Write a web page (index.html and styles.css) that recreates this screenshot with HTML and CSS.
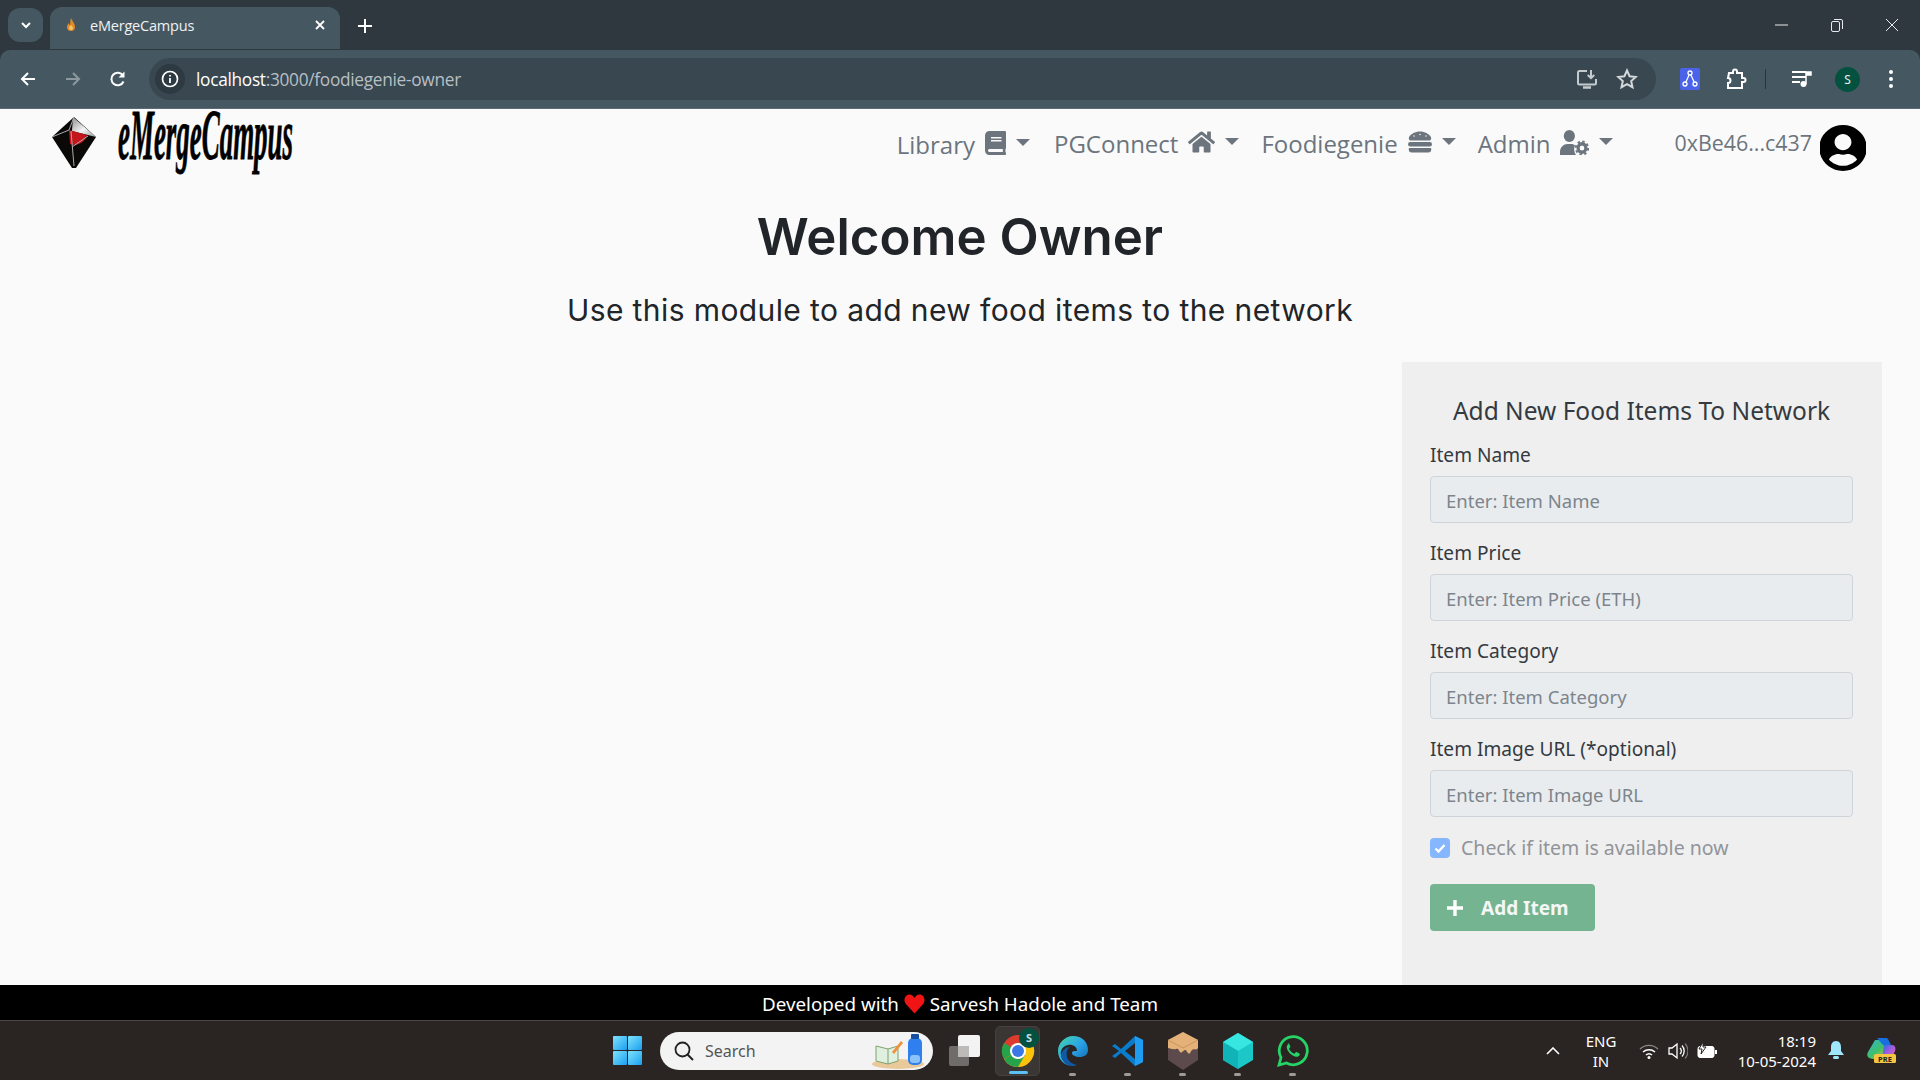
FILE: index.html
```html
<!DOCTYPE html>
<html lang="en">
<head>
<meta charset="utf-8">
<title>eMergeCampus</title>
<link rel="stylesheet" href="styles.css">
</head>
<body>
<header class="chrome">
  <div class="tabstrip">
    <button class="tabs-menu"><svg width="14" height="14" viewBox="0 0 14 14"><path d="M3 5l4 4 4-4" fill="none" stroke="#fff" stroke-width="2"/></svg></button>
    <div class="tab">
      <svg class="favicon" width="14" height="16" viewBox="0 0 14 16"><path d="M7 1c1 3 4 5 4 9a4 4 0 0 1-8 0c0-2 1-3 2-4 0 1 .5 2 1 2 .5-2 0-4 1-7z" fill="#e08a2a"/><path d="M7 8c1 1 2 2 2 3a2 2 0 0 1-4 0c0-1 1-2 2-3z" fill="#f7c46a"/></svg>
      <span class="tab-title">eMergeCampus</span>
      <svg width="12" height="12" viewBox="0 0 12 12"><path d="M2 2l8 8M10 2l-8 8" stroke="#fff" stroke-width="1.8"/></svg>
    </div>
    <svg class="newtab" width="14" height="14" viewBox="0 0 14 14"><path d="M7 0v14M0 7h14" stroke="#fff" stroke-width="2"/></svg>
    <div class="winctl">
      <svg width="14" height="14" viewBox="0 0 14 14"><path d="M0 7h13" stroke="#e8eaed" stroke-width="1"/></svg>
      <svg width="14" height="14" viewBox="0 0 14 14"><rect x="1.5" y="3.5" width="8" height="10" rx="1.5" fill="none" stroke="#e8eaed"/><path d="M4 1.5h7a1.5 1.5 0 0 1 1.5 1.5v8" fill="none" stroke="#e8eaed"/></svg>
      <svg width="14" height="14" viewBox="0 0 14 14"><path d="M1 1l12 12M13 1L1 13" stroke="#e8eaed" stroke-width="1"/></svg>
    </div>
  </div>
  <div class="toolbar">
    <svg class="tb-nav" width="18" height="18" viewBox="0 0 18 18"><path d="M16 9H3M9 3L3 9l6 6" fill="none" stroke="#fff" stroke-width="2"/></svg>
    <svg class="tb-nav" width="18" height="18" viewBox="0 0 18 18"><path d="M2 9h13M9 3l6 6-6 6" fill="none" stroke="#8c989e" stroke-width="2"/></svg>
    <svg class="tb-nav" width="18" height="18" viewBox="0 0 18 18"><path d="M14.5 11.5A6.3 6.3 0 1 1 14 5.5" fill="none" stroke="#fff" stroke-width="2"/><path d="M15.5 1.5v6h-6z" fill="#fff"/></svg>
    <div class="omnibox">
      <span class="site-info"><svg width="18" height="18" viewBox="0 0 18 18"><circle cx="9" cy="9" r="7.5" fill="none" stroke="#fff" stroke-width="1.7"/><path d="M9 8v5M9 5v1.6" stroke="#fff" stroke-width="1.8"/></svg></span>
      <span class="url"><span class="url-host">localhost</span>:3000/foodiegenie-owner</span>
      <svg class="omni-end" width="22" height="22" viewBox="0 0 22 22"><path d="M11 3H3.5A1.5 1.5 0 0 0 2 4.500V15a1.500 1.500 0 0 0 1.500 1.500h15A1.500 1.500 0 0 0 20 15v-4" fill="none" stroke="#c4cbcf" stroke-width="2"/><path d="M7 19.500h8" stroke="#c4cbcf" stroke-width="2.500"/><path d="M15 2v8M11.800 7l3.200 3.200L18.200 7" fill="none" stroke="#c4cbcf" stroke-width="2"/></svg>
      <svg class="omni-end" width="22" height="22" viewBox="0 0 22 22"><path d="M11 2.500l2.600 5.700 6.200.7-4.600 4.200 1.300 6.100L11 16.100l-5.500 3.100 1.300-6.100-4.600-4.200 6.200-.7z" fill="none" stroke="#d3d8db" stroke-width="2"/></svg>
    </div>
    <div class="tb-actions">
      <svg width="20" height="22" viewBox="0 0 20 22"><rect width="20" height="22" rx="2" fill="#4a63e8"/><path d="M10 5L5 16M10 5l5 11" stroke="#fff" stroke-width="1.300"/><circle cx="10" cy="5" r="2" fill="#4a63e8" stroke="#fff" stroke-width="1.300"/><circle cx="5" cy="16" r="2" fill="#4a63e8" stroke="#fff" stroke-width="1.300"/><circle cx="15" cy="16" r="2" fill="#4a63e8" stroke="#fff" stroke-width="1.300"/></svg>
      <svg class="gap-ext" width="22" height="22" viewBox="0 0 22 22"><path d="M4 5h4V3.500a2 2 0 0 1 4 0V5h5v5h1.500a2 2 0 0 1 0 4H17v6H3v-5a2.300 2.300 0 0 0 0-5z" fill="none" stroke="#fff" stroke-width="2"/></svg>
      <span class="tb-sep"></span>
      <svg width="20" height="20" viewBox="0 0 20 20"><path d="M0 3h14M0 8h14M0 13h8" stroke="#fff" stroke-width="2"/><path d="M14 6h5V3h-5zM14 3v12" stroke="#fff" stroke-width="1.500" fill="#fff"/><circle cx="11.500" cy="15" r="3" fill="#fff"/></svg>
      <span class="avatar-s">S</span>
      <svg class="kebab" width="4" height="18" viewBox="0 0 4 18"><circle cx="2" cy="2" r="2" fill="#fff"/><circle cx="2" cy="9" r="2" fill="#fff"/><circle cx="2" cy="16" r="2" fill="#fff"/></svg>
    </div>
  </div>
</header>

<main class="page">
  <nav class="navbar">
    <a class="brand" href="#">
      <svg class="brand-mark" width="44" height="51" viewBox="0 0 44 51">
        <defs><linearGradient id="gem" x1="0" y1="0" x2="1" y2="1"><stop offset="0" stop-color="#8d8d8d"/><stop offset=".55" stop-color="#f4f4f4"/><stop offset="1" stop-color="#9b9b9b"/></linearGradient></defs>
        <path d="M22 0L44 20 24 51 20 51 0 20z" fill="#0b0808"/>
        <path d="M21 0L44 20 20 14z" fill="url(#gem)"/>
        <path d="M17 13L35 18C33 25 27 28 21 28L18 27z" fill="#c3151b"/>
        <path d="M0 20L17 13M19 14L22 49M20 30L36 19M22 0L17 13" stroke="#aaa" stroke-width="1" fill="none"/>
      </svg>
      <span class="brand-clip"><span class="brand-text">eMergeCampus</span></span>
    </a>
    <ul class="nav-links">
      <li class="nav-item nav-library">Library
        <svg class="ico" width="21" height="24" viewBox="0 0 448 512"><path d="M448 360V24c0-13.300-10.700-24-24-24H96C43 0 0 43 0 96v320c0 53 43 96 96 96h328c13.300 0 24-10.700 24-24v-16c0-7.500-3.500-14.300-8.900-18.700-4.200-15.400-4.200-59.300 0-74.700 5.400-4.300 8.900-11.100 8.900-18.600zM128 134c0-3.300 2.700-6 6-6h212c3.300 0 6 2.700 6 6v20c0 3.300-2.700 6-6 6H134c-3.300 0-6-2.700-6-6v-20zm0 64c0-3.300 2.700-6 6-6h212c3.300 0 6 2.700 6 6v20c0 3.300-2.700 6-6 6H134c-3.300 0-6-2.700-6-6v-20zm253.400 250H96c-17.700 0-32-14.300-32-32 0-17.600 14.400-32 32-32h285.400c-1.900 17.100-1.900 46.900 0 64z"/></svg>
        <i class="caret"></i></li>
      <li class="nav-item">PGConnect
        <svg class="ico" width="27" height="24" viewBox="0 0 576 512"><path d="M280.370 148.260L96 300.110V464a16 16 0 0 0 16 16l112.060-.29a16 16 0 0 0 15.920-16V368a16 16 0 0 1 16-16h64a16 16 0 0 1 16 16v95.640a16 16 0 0 0 16 16.050L464 480a16 16 0 0 0 16-16V300L295.670 148.260a12.190 12.190 0 0 0-15.300 0zM571.600 251.470L488 182.560V44.050a12 12 0 0 0-12-12h-56a12 12 0 0 0-12 12v72.610L318.470 43a48 48 0 0 0-61 0L4.340 251.470a12 12 0 0 0-1.600 16.900l25.500 31A12 12 0 0 0 45.150 301l235.220-193.740a12.190 12.190 0 0 1 15.300 0L530.900 301a12 12 0 0 0 16.900-1.600l25.500-31a12 12 0 0 0-1.700-16.930z"/></svg>
        <i class="caret"></i></li>
      <li class="nav-item">Foodiegenie
        <svg class="ico" width="24" height="24" viewBox="0 0 512 512"><path d="M464 256H48a48 48 0 0 0 0 96h416a48 48 0 0 0 0-96zm16 128H32a16 16 0 0 0-16 16v16a64 64 0 0 0 64 64h352a64 64 0 0 0 64-64v-16a16 16 0 0 0-16-16zM58.640 224h394.720c34.570 0 54.620-43.900 34.820-75.880C448 83.200 359.550 32.100 256 32c-103.540.1-192 51.200-232.180 116.110C4 180.090 24.070 224 58.640 224zM384 112a16 16 0 1 1-16 16 16 16 0 0 1 16-16zM256 80a16 16 0 1 1-16 16 16 16 0 0 1 16-16zm-128 32a16 16 0 1 1-16 16 16 16 0 0 1 16-16z"/></svg>
        <i class="caret"></i></li>
      <li class="nav-item">Admin
        <svg class="ico" width="29" height="25" viewBox="0 0 31 25" preserveAspectRatio="none"><circle cx="10" cy="6" r="6"/><path d="M0 25v-3c0-5 4-8 8-8h4c2 0 3 .5 4 1.500-1.500 2.500-1 7 1 9.500z"/><circle cx="23.500" cy="18" r="4.200" fill="none" stroke="#6c757d" stroke-width="3.400"/><circle cx="23.500" cy="18" r="6.600" fill="none" stroke="#6c757d" stroke-width="2" stroke-dasharray="2.600 2.600"/></svg>
        <i class="caret"></i></li>
    </ul>
    <div class="account">
      <span class="address">0xBe46...c437</span>
      <svg width="46" height="46" viewBox="8 8 480 496" preserveAspectRatio="none"><path d="M248 8C111 8 0 119 0 256s111 248 248 248 248-111 248-248S385 8 248 8zm0 96c48.600 0 88 39.400 88 88s-39.400 88-88 88-88-39.400-88-88 39.400-88 88-88zm0 344c-58.700 0-111.300-26.600-146.500-68.200 18.800-35.400 55.600-59.800 98.500-59.800 2.400 0 4.800.4 7.100 1.100 13 4.200 26.600 6.900 40.900 6.900 14.300 0 28-2.700 40.900-6.900 2.300-.7 4.700-1.100 7.100-1.100 42.900 0 79.700 24.400 98.500 59.800C359.300 421.400 306.700 448 248 448z"/></svg>
    </div>
  </nav>

  <h1 class="title">Welcome Owner</h1>
  <p class="subtitle">Use this module to add new food items to the network</p>

  <section class="panel">
    <h2 class="panel-title">Add New Food Items To Network</h2>
    <div class="field"><label class="field-label">Item Name</label><input class="field-input" placeholder="Enter: Item Name"></div>
    <div class="field"><label class="field-label">Item Price</label><input class="field-input" placeholder="Enter: Item Price (ETH)"></div>
    <div class="field"><label class="field-label">Item Category</label><input class="field-input" placeholder="Enter: Item Category"></div>
    <div class="field"><label class="field-label">Item Image URL (*optional)</label><input class="field-input" placeholder="Enter: Item Image URL"></div>
    <div class="check-row">
      <span class="check-box"><svg width="14" height="14" viewBox="0 0 14 14"><path d="M2.500 7.500l3 3 6-6.500" fill="none" stroke="#fff" stroke-width="2.400"/></svg></span>
      <span class="check-label">Check if item is available now</span>
    </div>
    <button class="add-btn"><svg width="18" height="18" viewBox="0 0 18 18"><path d="M9 1v16M1 9h16" stroke="#fff" stroke-width="3.400"/></svg><span>Add Item</span></button>
  </section>
</main>

<footer class="dev-footer">Developed with <svg class="heart" width="21" height="21" viewBox="0 0 20 20"><path d="M10 19.500L1.800 10.500C-1 7 .8 1.500 5.300 1.500 7.500 1.500 9 3 10 4.800 11 3 12.500 1.500 14.700 1.500c4.500 0 6.300 5.500 3.500 9z" fill="#f01414"/></svg> Sarvesh Hadole and Team</footer>

<div class="taskbar">
  <div class="tb-center">
    <svg class="win" width="29" height="29" viewBox="0 0 29 29"><defs><linearGradient id="w" x1="0" y1="0" x2="1" y2="1"><stop offset="0" stop-color="#7fe3fb"/><stop offset="1" stop-color="#1a9ff0"/></linearGradient></defs><rect width="14" height="14" rx="1" fill="url(#w)"/><rect x="15" width="14" height="14" rx="1" fill="url(#w)"/><rect y="15" width="14" height="14" rx="1" fill="url(#w)"/><rect x="15" y="15" width="14" height="14" rx="1" fill="url(#w)"/></svg>
    <div class="search">
      <svg width="22" height="22" viewBox="0 0 22 22"><circle cx="9.500" cy="9.500" r="7" fill="none" stroke="#222" stroke-width="1.800"/><path d="M14.500 14.500L20 20" stroke="#222" stroke-width="2"/></svg>
      <span class="search-text">Search</span>
      <svg class="search-art" width="56" height="38" viewBox="0 0 56 38"><ellipse cx="26" cy="32" rx="26" ry="5" fill="#e9c99a"/><path d="M4 14l12 3 10-3v15l-10 3-12-3z" fill="#dff0e0" stroke="#7ea26f"/><path d="M16 17v15" stroke="#7ea26f"/><path d="M20 20L29 9l2 2-9 11z" fill="#f0913c"/><rect x="36" y="6" width="14" height="27" rx="5" fill="#2f80ee"/><rect x="39" y="2" width="8" height="5" rx="1" fill="#164f9f"/><rect x="38" y="23" width="10" height="8" rx="3" fill="#8cc2fa"/></svg>
    </div>
    <svg class="taskview" width="31" height="31" viewBox="0 0 31 31"><rect y="11" width="20" height="20" rx="2" fill="#6f6c6a"/><rect x="9" width="22" height="22" rx="2" fill="#f3f3f3"/><rect x="9" y="11" width="11" height="11" fill="#bdbbb9"/></svg>
    <div class="tb-app active">
      <svg width="34" height="34" viewBox="0 0 34 34"><circle cx="17" cy="17" r="16" fill="#de3b2f"/><path d="M17 17L3 25a16 16 0 0 1 0-16z" fill="#26a24a"/><path d="M17 17L3 25a16 16 0 0 0 14 8 16 16 0 0 0 14-24z" fill="#fbc20a"/><path d="M3 25a16 16 0 0 0 14 8l7-12-7-4z" fill="#26a24a"/><circle cx="17" cy="17" r="8" fill="#fff"/><circle cx="17" cy="17" r="6" fill="#3b78e7"/></svg>
      <span class="badge-s">S</span>
      <i class="running-bar"></i>
    </div>
    <div class="tb-app"><svg width="32" height="32" viewBox="0 0 32 32"><defs><linearGradient id="e" x1="0" y1="0" x2="1" y2="1"><stop offset="0" stop-color="#46d8a8"/><stop offset=".5" stop-color="#2aa4e6"/><stop offset="1" stop-color="#0d5ea8"/></linearGradient></defs><path d="M16 1c9 0 15 6 15 14 0 5-4 7-8 7-5 0-8-2-8-4s2-2 5-2c0-5-5-7-9-6C6 11 3 15 4 20 5 27 11 31 16 31 8 31 1 25 1 16 1 8 8 1 16 1z" fill="url(#e)"/><path d="M4 20c1-5 5-8 9-8-3 2-4 6-3 10 1 4 5 7 10 8-2 .7-3 1-4 1-6 0-11-5-12-11z" fill="#0f5aa6"/></svg><i class="dot"></i></div>
    <div class="tb-app"><svg width="32" height="32" viewBox="0 0 32 32"><path d="M23 1l8 4v22l-8 4L9 18l-6 5-3-2 7-5-7-5 3-2 6 5z" fill="#0a7ccb"/><path d="M23 8v16l-10-8z" fill="#2a2422"/><path d="M23 1l8 4v22l-8 4z" fill="#1f9cf0"/></svg><i class="dot"></i></div>
    <div class="tb-app"><svg width="30" height="38" viewBox="0 0 30 38"><path d="M15 0l15 8v20l-15 10L0 28V8z" fill="#5d4a4c"/><path d="M15 0l15 8v8c-2 3-4 0-6 2s-2 5-4 3-1-3-3-3-3 4-5 2-1-4-4-3-6-1-8-1V8z" fill="#e4b278"/><path d="M15 16L0 8M15 16l15-8" stroke="#c9955f" fill="none"/></svg><i class="dot"></i></div>
    <div class="tb-app"><svg width="30" height="36" viewBox="0 0 30 36"><path d="M15 0l15 9v18l-15 9L0 27V9z" fill="#1bc7c7"/><path d="M15 0l15 9-15 9L0 9z" fill="#37e6e0"/><path d="M15 18v18L0 27V9z" fill="#0fb3b8"/></svg><i class="dot"></i></div>
    <div class="tb-app"><svg width="32" height="32" viewBox="0 0 32 32"><path d="M2 30l2-7.500A14 14 0 1 1 9.500 28z" fill="none" stroke="#25d366" stroke-width="2.800"/><path d="M11.500 9c-1 .5-2 2-1.700 4 .6 3.500 5 8 9 8.800 2 .3 3.500-.8 4-2 .2-.8 0-1.200-.4-1.400l-2.800-1.400c-.5-.2-.8 0-1.100.4l-.8 1c-.3.300-.6.300-1 .1-2-.9-3.500-2.400-4.500-4.300-.2-.4-.1-.7.2-1l.8-1c.2-.3.200-.6.100-.9l-1.200-2.500c-.3-.6-.8-.8-1.600-.8z" fill="#25d366"/></svg><i class="dot"></i></div>
  </div>
  <div class="tray">
    <svg width="14" height="8" viewBox="0 0 14 8"><path d="M1 7l6-6 6 6" fill="none" stroke="#fff" stroke-width="1.600"/></svg>
    <div class="lang"><span>ENG</span><span>IN</span></div>
    <div class="tray-icons">
      <svg width="20" height="16" viewBox="0 0 20 16"><path d="M1 6a13 13 0 0 1 18 0" fill="none" stroke="#8c8a88" stroke-width="1.300"/><path d="M4 9a9 9 0 0 1 12 0M7 12a4.500 4.500 0 0 1 6 0" fill="none" stroke="#fff" stroke-width="1.500"/><circle cx="10" cy="14.500" r="1.500" fill="#fff"/></svg>
      <svg width="20" height="18" viewBox="0 0 20 18"><path d="M1 6h3l5-4v14l-5-4H1z" fill="none" stroke="#fff" stroke-width="1.300"/><path d="M12 6a4 4 0 0 1 0 6M14 3.500a8 8 0 0 1 0 11" fill="none" stroke="#fff" stroke-width="1.300"/><path d="M17 1.500a11 11 0 0 1 0 15" fill="none" stroke="#777" stroke-width="1.200"/></svg>
      <svg width="21" height="18" viewBox="0 0 21 18"><rect x="1" y="4.500" width="16" height="11" rx="2" fill="#fff" stroke="#fff"/><rect x="18" y="8" width="2" height="4" fill="#fff"/><path d="M6 0L2 7h3l-1 5 5-7H6z" fill="#fff" stroke="#2a2422"/></svg>
    </div>
    <div class="clock"><span>18:19</span><span>10-05-2024</span></div>
    <svg class="bell" width="16" height="19" viewBox="0 0 16 19"><path d="M8 0c3.500 0 5 3 5 6v4l3 4H0l3-4V6c0-3 1.500-6 5-6z" fill="#9fe6fb"/><rect x="5" y="15" width="6" height="3" rx="1.500" fill="#9fe6fb"/></svg>
    <svg class="copilot" width="29" height="27" viewBox="0 0 29 27"><defs><linearGradient id="c1" x1="0" y1="0" x2="1" y2="1"><stop offset="0" stop-color="#2fb8d6"/><stop offset=".5" stop-color="#3fbf6a"/><stop offset="1" stop-color="#f0c72f"/></linearGradient><linearGradient id="c2" x1="0" y1="0" x2="1" y2="1"><stop offset="0" stop-color="#1a6fe0"/><stop offset=".5" stop-color="#a35ce0"/><stop offset="1" stop-color="#f06aa8"/></linearGradient></defs><path d="M8 3h12l3 6-7 13H6c-5 0-7-3-5-7z" fill="url(#c1)"/><path d="M17 8h8c3 0 4 3 3 6l-3 7H15z" fill="url(#c2)"/><path d="M10 1h9c1 0 2 .5 2.500 2L24 8H16z" fill="#1a6fe0"/><rect x="7" y="17" width="22" height="9" rx="1.500" fill="#f4c542"/><text class="pre" x="18" y="24.500" text-anchor="middle">PRE</text></svg>
  </div>
</div>
</body>
</html>
```
FILE: styles.css
```css
* { box-sizing: border-box; }
html, body { margin: 0; height: 100%; }
body {
  display: flex;
  flex-direction: column;
  height: 1080px;
  overflow: hidden;
  background: #fafafa;
  font-family: "Noto Sans", "Open Sans", sans-serif;
  color: #212529;
}

/* browser chrome */
.chrome { flex: none; background: #2e383e; }
.tabstrip { height: 50px; display: flex; align-items: flex-start; padding: 8px 0 0 8px; }
.tabs-menu { width: 35px; height: 34px; background: #455862; border: 0; border-radius: 12px; display: flex; align-items: center; justify-content: center; padding: 0; margin-right: 7px; }
.tab { width: 290px; height: 42px; margin-top: -1px; background: #455862; border-radius: 12px 12px 0 0; display: flex; align-items: center; padding: 0 14px 6px 14px; color: #fff; }
.favicon { flex: none; }
.tab-title { flex: 1; margin-left: 12px; font-family: "Open Sans", sans-serif; font-size: 14.500px; letter-spacing: -.2px; color: #f0f2f3; }
.newtab { margin: 11px 0 0 18px; }
.winctl { margin-left: auto; margin-top: 10px; margin-right: 21px; display: flex; gap: 41px; }
.toolbar { height: 59px; background: #455862; border-radius: 10px 10px 0 0; display: flex; align-items: center; padding: 0 15px 0 19px; border-bottom: 1px solid #5b6b74; }
.tb-nav { margin-right: 27px; flex: none; }
.tb-nav:nth-child(3) { margin-right: 20px; }
.omnibox { flex: none; width: 1507px; height: 42px; background: #394750; border-radius: 21px; display: flex; align-items: center; padding: 0 18px 0 6px; margin-left: 2px; }
.site-info { width: 30px; height: 30px; border-radius: 50%; background: #2e3a41; display: flex; align-items: center; justify-content: center; }
.url { flex: 1; margin-left: 11px; font-family: "Open Sans", sans-serif; font-size: 17.300px; letter-spacing: -.3px; color: #b7bfc4; }
.url-host { color: #fff; }
.omni-end { margin-left: 18px; flex: none; }
.tb-actions { flex: 1; display: flex; align-items: center; margin-left: 24px; }
.gap-ext { margin-left: 25px; }
.tb-sep { width: 1px; height: 20px; background: #2a353b; margin: 0 26px 0 18px; }
.avatar-s { width: 25px; height: 25px; margin-left: 23px; border-radius: 50%; background: #04513f; color: #e8f0ee; font-size: 12px; display: flex; align-items: center; justify-content: center; }
.kebab { margin-left: 29px; }

/* page */
.page { flex: 1; min-height: 0; display: flex; flex-direction: column; }
.navbar { height: 64px; display: flex; align-items: flex-start; padding: 5px 54px 0 52px; flex: none; }
.brand { display: flex; align-items: flex-start; text-decoration: none; color: #000; }
.brand-mark { margin-top: 3px; }
.brand-clip { display: block; width: 175px; height: 40px; margin-left: 22px; }
.brand-text { display: block; width: 442px; font-family: "Liberation Serif", serif; font-style: italic; font-weight: 700; font-size: 68px; line-height: 40px; white-space: nowrap; transform: scale(.396, 1.05); transform-origin: 0 0; -webkit-text-stroke: .8px #000; }
.nav-links { list-style: none; display: flex; align-items: center; gap: 22px; margin: 13px 0 0 auto; padding: 0; }
.nav-item { display: flex; align-items: center; font-family: "Open Sans", sans-serif; font-size: 24px; line-height: 32px; color: #6c757d; }
.nav-library { margin-top: 2px; margin-right: 2px; }
.ico { fill: #6c757d; margin-left: 10px; margin-top: -4px; flex: none; }
.caret { width: 0; height: 0; border-left: 7px solid transparent; border-right: 7px solid transparent; border-top: 7px solid #6c757d; margin-left: 10px; margin-top: -6px; }
.account { display: flex; align-items: flex-start; margin-left: 61px; gap: 8px; }
.address { font-family: "Open Sans", sans-serif; font-size: 21.400px; line-height: 32px; color: #6c757d; margin-top: 13px; }
.account svg { margin-top: 11px; }
.title { margin: 34px 0 0; text-align: center; font-family: Inter, sans-serif; font-weight: 560; font-size: 51px; line-height: 60px; color: #212529; }
.subtitle { margin: 25px 0 0; text-align: center; font-family: Inter, sans-serif; font-size: 30px; line-height: 36px; color: #212529; letter-spacing: .4px; }

/* form panel */
.panel { flex: 1; align-self: flex-end; width: 480px; margin: 34px 38px 0 0; padding: 32px 29px 0 28px; background: #efefef; }
.panel-title { margin: 0 0 10px; text-align: center; font-size: 24.500px; font-weight: 400; line-height: 34px; color: #343a40; }
.field { margin-bottom: 13px; }
.field-label { display: block; height: 38px; padding-top: 4px; font-size: 19.100px; line-height: 26px; color: #343a40; }
.field-input { display: block; width: 423px; height: 47px; padding: 1px 15px 0; border: 1px solid #ced4da; border-radius: 4px; background: #e9ecef; font: inherit; font-size: 18.500px; }
.field-input::placeholder { color: #7d858c; opacity: 1; }
.check-row { display: flex; align-items: center; gap: 11px; margin-top: 19px; height: 22px; }
.check-box { width: 20px; height: 20px; margin-top: 2px; border-radius: 4px; background: #86b7fe; display: flex; align-items: center; justify-content: center; }
.check-label { font-size: 19.500px; color: #91949a; }
.add-btn { display: flex; align-items: center; width: 165px; height: 47px; margin-top: 26px; padding: 0 0 0 16px; border: 0; border-radius: 4px; background: #74b491; color: #f4f7f5; font: inherit; font-size: 19px; font-weight: 700; }
.add-btn span { margin-left: 17px; }

.dev-footer { flex: none; height: 35px; padding-top: 2px; background: #000; color: #fff; display: flex; align-items: center; justify-content: center; font-size: 18.800px; white-space: pre; }
.heart { margin: 0; }

/* taskbar */
.taskbar { flex: none; height: 60px; display: flex; align-items: center; background: #2a2422; border-top: 1px solid #4a4644; padding-left: 613px; }
.tb-center { display: flex; align-items: center; }
.search { width: 273px; height: 38px; margin-left: 18px; background: #f3f3f3; border-radius: 19px; display: flex; align-items: center; padding-left: 13px; }
.search-text { flex: 1; margin-left: 10px; font-size: 16px; color: #555; }
.search-art { margin-right: 5px; }
.taskview { margin: 0 15px 0 16px; }
.tb-app { position: relative; width: 45px; height: 50px; margin-right: 10px; display: flex; align-items: center; justify-content: center; }
.tb-app.active { background: #3a3634; border-radius: 5px; border: 1px solid #454140; }
.badge-s { position: absolute; top: 1px; right: 0; width: 20px; height: 20px; border-radius: 50%; background: #04513f; color: #cde; font-size: 11px; font-weight: 700; display: flex; align-items: center; justify-content: center; }
.running-bar { position: absolute; left: 13px; bottom: 1px; width: 19px; height: 3px; border-radius: 2px; background: #5cc0f7; }
.dot { position: absolute; left: 19px; bottom: 0; width: 7px; height: 3px; border-radius: 2px; background: #9d9b99; }
.tray { display: flex; align-items: center; margin-left: 221px; color: #fff; }
.lang { display: flex; flex-direction: column; align-items: center; width: 30px; margin-left: 26px; font-size: 15px; line-height: 20px; }
.tray-icons { display: flex; align-items: center; gap: 9px; margin-left: 23px; }
.clock { display: flex; flex-direction: column; align-items: flex-end; width: 90px; margin-left: 8px; font-size: 15px; line-height: 20px; }
.bell { margin-left: 12px; }
.copilot { margin-left: 23px; }
.pre { font-family: "Noto Sans", sans-serif; font-size: 7.500px; font-weight: 700; fill: #222; }
```
